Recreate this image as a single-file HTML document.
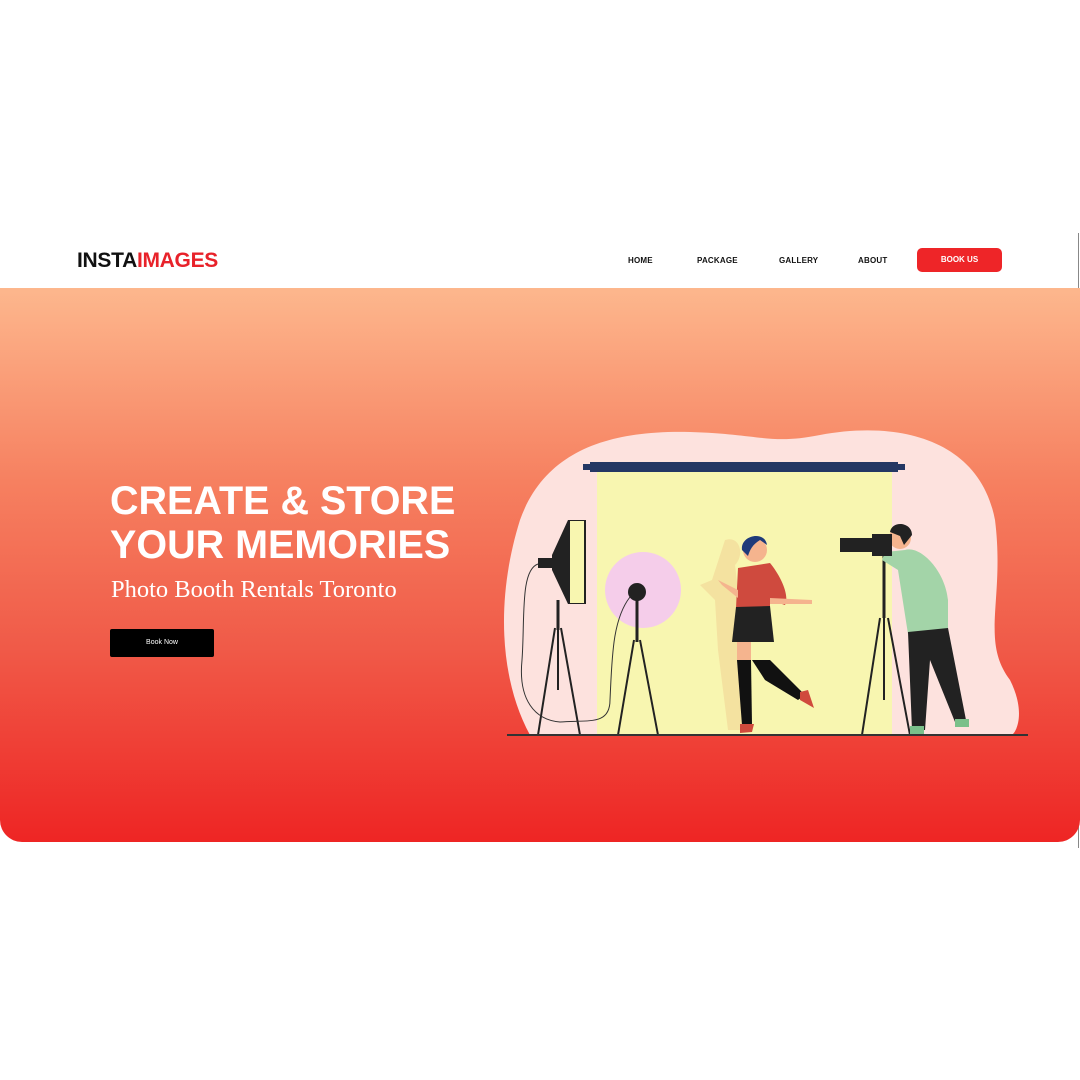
<!DOCTYPE html>
<html><head><style>
body{margin:0;width:1080px;height:1080px;background:#fff;position:relative;overflow:hidden;font-family:"Liberation Sans",sans-serif}
.hero{position:absolute;left:0;top:288px;width:1080px;height:554px;border-radius:0 0 22px 22px;background:linear-gradient(#fdb78d,#f68060 35%,#f05a48 65%,#ee2524)}
.nav a{position:absolute;top:256px;font-size:8px;font-weight:bold;color:#111;letter-spacing:.2px}
.btn{position:absolute;left:917px;top:248px;width:85px;height:24px;background:#ee2528;border-radius:5px;color:#fff;font-size:8px;font-weight:bold;text-align:center;line-height:24px}
h1{position:absolute;left:110px;top:479px;margin:0;color:#fff;font-size:39.5px;line-height:44px;font-weight:bold;letter-spacing:0}
.sub{position:absolute;left:111px;top:576px;color:#fff;font-family:"Liberation Serif",serif;font-size:24.5px}
.bn{position:absolute;left:110px;top:629px;width:104px;height:28px;background:#000;border-radius:2px;color:#fff;font-size:7px;text-align:center;line-height:28px}
.logo{position:absolute;left:77px;top:249px;font-size:21px;font-weight:bold;letter-spacing:-.3px}
</style></head><body>
<div class="logo"><span style="color:#111">INSTA</span><span style="color:#e8222a">IMAGES</span></div>
<div class="nav"><a style="left:628px">HOME</a><a style="left:697px">PACKAGE</a><a style="left:779px">GALLERY</a><a style="left:858px">ABOUT</a></div>
<div class="btn">BOOK US</div>
<div style="position:absolute;left:1078px;top:233px;width:1px;height:615px;background:#888"></div>
<div class="hero"></div>
<h1>CREATE &amp; STORE<br>YOUR MEMORIES</h1>
<div class="sub">Photo Booth Rentals Toronto</div>
<div class="bn">Book Now</div>
<svg width="1080" height="1080" style="position:absolute;left:0;top:0">
<path d="M530 735 C500 680 495 600 520 520 C545 450 610 430 690 432 C760 434 770 445 820 435 C900 420 980 440 995 520 C1005 600 980 640 1010 680 C1025 710 1018 730 1012 735 Z" fill="#fde2de"/>
<rect x="597" y="470" width="295" height="265" fill="#f8f6b0"/>
<rect x="583" y="464" width="322" height="6" fill="#243763"/>
<rect x="590" y="462" width="308" height="10" fill="#243763"/>
<circle cx="643" cy="590" r="38" fill="#f5cdea"/>
<polygon points="568,520 586,520 586,604 568,604 552,570 552,555" fill="#222"/>
<rect x="570" y="521" width="14" height="82" fill="#f8f6b0"/>
<rect x="538" y="558" width="16" height="10" fill="#222"/>
<line x1="558" y1="600" x2="558" y2="630" stroke="#222" stroke-width="3"/>
<path d="M555 628 L538 735 M561 628 L580 735 M558 628 L558 690" stroke="#222" stroke-width="2" fill="none"/>
<path d="M538 564 C520 570 525 620 522 660 C518 700 535 720 560 722 C590 720 610 725 610 700 C612 660 612 620 630 597" stroke="#333" stroke-width="1" fill="none"/>
<circle cx="637" cy="592" r="9" fill="#222"/>
<line x1="637" y1="600" x2="637" y2="642" stroke="#222" stroke-width="3"/>
<path d="M634 640 L618 735 M640 640 L658 735" stroke="#222" stroke-width="2" fill="none"/>
<path d="M725 540 C740 535 745 555 735 565 L745 650 L745 730 L728 730 L718 650 L715 600 L700 585 L712 580 Z" fill="#f4e2a0"/>
<circle cx="755" cy="550" r="12" fill="#f5b48e"/>
<path d="M742 550 C740 535 765 530 767 545 L760 540 C752 545 750 550 748 556 Z" fill="#1f3b7a"/>
<path d="M738 568 L770 563 C780 575 790 595 785 605 L770 600 L770 608 L736 608 Z" fill="#cf4a3e"/>
<path d="M770 598 L812 600 L812 604 L770 604 Z" fill="#f5b48e"/>
<path d="M738 590 L718 580 L722 585 L738 598 Z" fill="#f5b48e"/>
<path d="M736 607 L770 606 L774 642 L732 642 Z" fill="#222"/>
<rect x="737" y="642" width="14" height="20" fill="#f5b48e"/>
<path d="M737 660 L751 660 L752 725 L742 725 Z" fill="#111"/>
<path d="M752 660 L770 660 L805 695 L798 700 L765 680 Z" fill="#111"/>
<path d="M740 724 L754 724 L752 732 L740 733 Z M800 692 L808 690 L814 708 L800 700 Z" fill="#d04a3c"/>
<line x1="884" y1="550" x2="884" y2="618" stroke="#222" stroke-width="3"/>
<path d="M880 618 L862 735 M888 618 L910 735 M884 618 L884 700" stroke="#222" stroke-width="2" fill="none"/>
<path d="M905 550 C920 545 945 570 948 600 L948 632 L908 634 L898 570 L882 560 L885 552 Z" fill="#a3d4a8"/>
<path d="M908 632 L948 628 L966 720 L955 722 L930 660 L925 730 L912 730 Z" fill="#222"/>
<rect x="910" y="726" width="14" height="8" fill="#7ac08a"/><rect x="955" y="719" width="14" height="8" fill="#7ac08a"/>
<circle cx="900" cy="538" r="11" fill="#f5b48e"/>
<path d="M890 532 C892 520 912 522 912 535 L904 545 L900 536 Z" fill="#222"/>
<rect x="840" y="538" width="35" height="14" fill="#222"/>
<rect x="872" y="534" width="20" height="22" fill="#222"/>
<line x1="507" y1="735" x2="1028" y2="735" stroke="#333" stroke-width="2"/>
</svg>
</body></html>
